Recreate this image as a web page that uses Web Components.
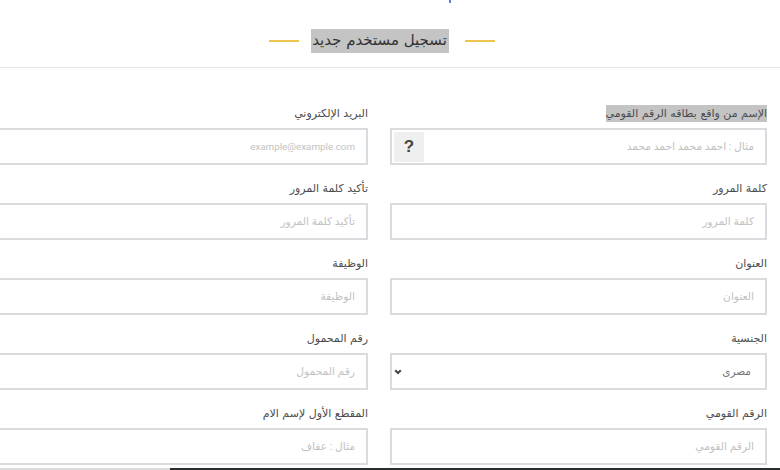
<!DOCTYPE html>
<html lang="ar" dir="rtl">
<head>
<meta charset="utf-8">
<title>تسجيل مستخدم جديد</title>
<style>
  html, body { margin: 0; height: 100%; background: #fff; overflow: hidden; }
  body { font-family: "DejaVu Sans", sans-serif; }
</style>
</head>
<body>
<register-page>
  <section-title slot="title">تسجيل مستخدم جديد</section-title>

  <form-field label="الإسم من واقع بطاقه الرقم القومي" placeholder="مثال : احمد محمد احمد محمد" marked help></form-field>
  <form-field label="البريد الإلكتروني" placeholder="example@example.com" latin></form-field>
  <form-field label="كلمة المرور" placeholder="كلمة المرور"></form-field>
  <form-field label="تأكيد كلمة المرور" placeholder="تأكيد كلمة المرور"></form-field>
  <form-field label="العنوان" placeholder="العنوان"></form-field>
  <form-field label="الوظيفة" placeholder="الوظيفة"></form-field>
  <form-field label="الجنسية" value="مصرى" select></form-field>
  <form-field label="رقم المحمول" placeholder="رقم المحمول"></form-field>
  <form-field label="الرقم القومي" placeholder="الرقم القومي"></form-field>
  <form-field label="المقطع الأول لإسم الام" placeholder="مثال : عفاف"></form-field>
</register-page>

<script>
class SectionTitle extends HTMLElement {
  constructor() {
    super();
    this.attachShadow({ mode: "open" });
  }

  connectedCallback() {
    this.shadowRoot.innerHTML = `
      <style>
        :host {
          display: flex;
          align-items: center;
          justify-content: center;
          height: 68px;
          padding: 14px 17px 0 0;
          box-sizing: border-box;
          border-bottom: 1px solid #e4e4e4;
        }
        .line { width: 30px; height: 2px; background: #ecc54e; }
        h2 {
          margin: 0 16px 0 12px;
          width: 138px;
          height: 24px;
          line-height: 23px;
          font-size: 15px;
          font-weight: 400;
          text-align: center;
          white-space: nowrap;
          color: #333;
          background: #c4c4c4;
        }
      </style>
      <span class="line"></span>
      <h2><slot></slot></h2>
      <span class="line"></span>
    `;
  }
}

class FormField extends HTMLElement {
  constructor() {
    super();
    this.attachShadow({ mode: "open" });
  }

  connectedCallback() {
    const label = this.getAttribute("label");
    const text = this.getAttribute("value") || this.getAttribute("placeholder");
    const isEmpty = !this.hasAttribute("value");
    const help = this.hasAttribute("help") ? `<span class="help">?</span>` : "";
    const arrow = this.hasAttribute("select")
      ? `<svg class="arrow" width="8" height="6" viewBox="0 0 8 6"><path d="M1.2 1.2l2.8 2.8 2.8-2.8" fill="none" stroke="#444" stroke-width="2"/></svg>`
      : "";
    this.shadowRoot.innerHTML = `
      <style>
        :host { display: block; height: 75px; }
        label {
          display: block;
          height: 22px;
          line-height: 22px;
          font-size: 11px;
          color: #4c4c4c;
          white-space: nowrap;
        }
        .text { padding: 2px 0; }
        :host([marked]) .text { background: #c4c4c4; }
        .box {
          display: flex;
          align-items: center;
          gap: 8px;
          height: 37px;
          margin-top: 3px;
          padding: 2px 11px 2px 2px;
          box-sizing: border-box;
          border: 2px solid #d9dbdf;
          background: #fff;
        }
        .value {
          flex: 1;
          font-family: Roboto, "DejaVu Sans", sans-serif;
          font-size: 10.7px;
          color: #c2c2c2;
          white-space: nowrap;
        }
        :host([latin]) .value { font-size: 9.8px; }
        .value.filled { color: #777; font-size: 10.5px; margin-right: 3px; }
        .help {
          order: 2;
          width: 30px;
          height: 30px;
          background: #efefef;
          color: #444;
          font: 700 17px/30px "Liberation Sans", sans-serif;
          text-align: center;
        }
        .arrow { order: 2; }
      </style>
      <label><span class="text">${label}</span></label>
      <div class="box">
        <span class="value ${isEmpty ? "" : "filled"}">${text}</span>
        ${help}${arrow}
      </div>
    `;
  }
}

class RegisterPage extends HTMLElement {
  constructor() {
    super();
    this.attachShadow({ mode: "open" });
  }

  connectedCallback() {
    this.shadowRoot.innerHTML = `
      <style>
        :host {
          display: block;
          position: relative;
          height: 470px;
          overflow: hidden;
        }
        .fields {
          display: grid;
          grid-template-columns: 377px 377px;
          column-gap: 22px;
          justify-content: start;
          padding: 35px 13px 0 0;
        }
        .dot {
          position: absolute;
          top: 0;
          left: 449px;
          width: 2px;
          height: 3px;
          background: #6a78d8;
        }
        .strip {
          position: absolute;
          left: 0;
          right: 0;
          bottom: 0;
          height: 2px;
          background: linear-gradient(to right, #dcdcdc 170px, #2a2e2f 170px);
        }
      </style>
      <span class="dot"></span>
      <slot name="title"></slot>
      <div class="fields"><slot></slot></div>
      <span class="strip"></span>
    `;
  }
}

customElements.define("section-title", SectionTitle);
customElements.define("form-field", FormField);
customElements.define("register-page", RegisterPage);
</script>
</body>
</html>
